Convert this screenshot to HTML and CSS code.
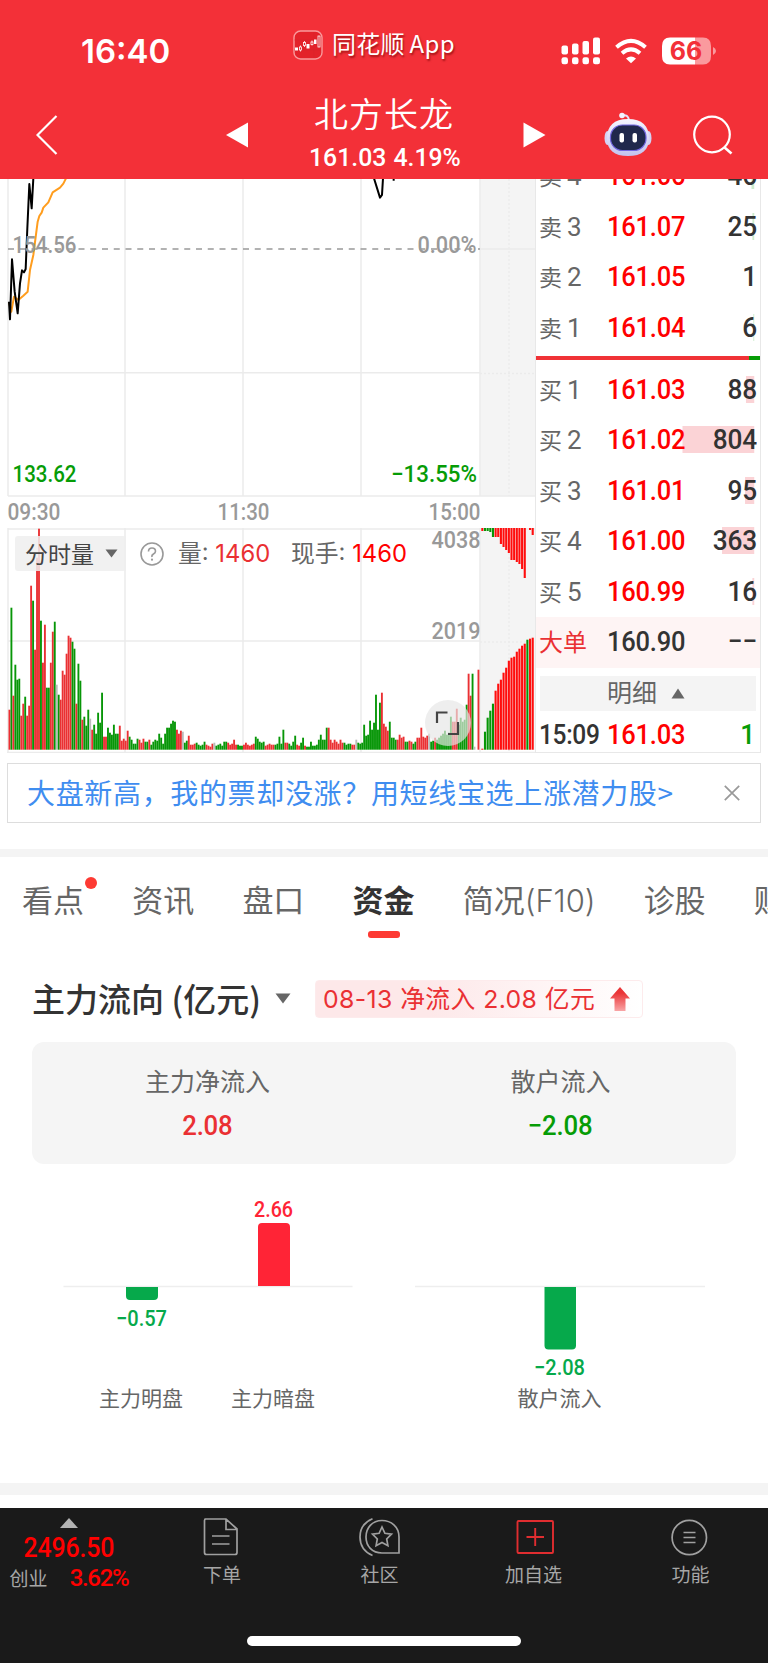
FILE: index.html
```html
<!DOCTYPE html>
<html lang="zh-CN">
<head>
<meta charset="utf-8">
<title>北方长龙 161.03</title>
<link rel="stylesheet" href="styles.css">
</head>
<body>
<div class="app">
  <header class="header">
    <div class="status">
      <div class="clock">16:40</div>
      <div class="source">
        <svg width="30" height="30" viewBox="0 0 30 30"><rect x="1" y="1" width="28" height="28" rx="6.5" fill="#e3222a" stroke="#f99a9c" stroke-width="1.4"/><path d="M1.500 10H28M1.500 20H28M21 2V28" stroke="#d8262c" stroke-width=".6"/><g fill="#fff"><rect x="2" y="17.500" width="3" height="3"/><rect x="13.500" y="14" width="3" height="4.500"/><rect x="21" y="9.500" width="2.500" height="4.500"/></g><g fill="none" stroke="#fff" stroke-width=".8"><path d="M7.500 15.500V17M7.500 20V21.500M11.500 11V12.500M11.500 15.500V17M19 10.500V12M19 14.500V15.500"/><rect x="6.500" y="17" width="2" height="3"/><rect x="10.500" y="12.500" width="2" height="3"/><rect x="18" y="12" width="2" height="2.500"/><rect x="25" y="6" width="2" height="11"/></g></svg>
        <span>同花顺 App</span>
      </div>
      <svg class="signals" width="156" height="30" viewBox="561 36 156 30">
        <g fill="#fff"><rect x="561.500" y="45.500" width="6.500" height="9" rx="2"/><rect x="572" y="43.500" width="6.500" height="11" rx="2"/><rect x="582.500" y="41" width="6.500" height="13.500" rx="2"/><rect x="593" y="37.500" width="7" height="17" rx="2"/><rect x="561.500" y="57.300" width="6.500" height="7" rx="2.200"/><rect x="572" y="57.300" width="6.500" height="7" rx="2.200"/><rect x="582.500" y="57.300" width="6.500" height="7" rx="2.200"/><rect x="593" y="57.300" width="7" height="7" rx="2.200"/>
        <path d="M626 58.500Q631 54.500 636 58.500L631 63.300Z"/></g>
        <g fill="none" stroke="#fff" stroke-width="4"><path d="M616.500 47.300Q631 34.500 645.500 47.300"/><path d="M622 53.300Q631 45.500 640 53.300"/></g>
        <path d="M670 37.500H695V64.500H670Q662 64.500 662 56V46Q662 37.500 670 37.500Z" fill="#fff"/><path d="M695 37.500H703Q711 37.500 711 46V56Q711 64.500 703 64.500H695Z" fill="#fa9a9e"/><path d="M713 47Q716 48.500 716 51T713 55Z" fill="#fa9a9e"/>
        <text class="battery" x="686" y="60.200" text-anchor="middle">66</text>
      </svg>
    </div>
    <div class="nav">
      <svg class="nav-back" width="22" height="40" viewBox="0 0 22 40"><path d="M20.500 1L1.500 20L20.500 39" fill="none" stroke="#fff" stroke-width="2.200"/></svg>
      <svg class="nav-prev" width="23" height="26" viewBox="0 0 23 26"><path d="M22 .500V25.500L0 13Z" fill="#fff"/></svg>
      <div class="nav-title"><div class="stock-name">北方长龙</div><div class="stock-quote">161.03 4.19%</div></div>
      <svg class="nav-next" width="23" height="26" viewBox="0 0 23 26"><path d="M.500 .500V25.500L22.500 13Z" fill="#fff"/></svg>
      <svg class="nav-bot" width="48" height="44" viewBox="0 0 48 44"><defs><linearGradient id="shell" x1="0" y1="0" x2="0" y2="1"><stop offset="0" stop-color="#f5f5ff"/><stop offset="1" stop-color="#c3c2ee"/></linearGradient></defs><path d="M18 3.500Q24 2 25 8" fill="none" stroke="#e4e2fa" stroke-width="2"/><circle cx="18" cy="3.500" r="2.800" fill="#f3f2ff"/><ellipse cx="3.500" cy="26" rx="3" ry="7" fill="#d4d2f4"/><ellipse cx="44.500" cy="26" rx="3" ry="7" fill="#d4d2f4"/><path d="M24 7C38 7 45 14 45 26S38 44 24 44S3 38 3 26S10 7 24 7Z" fill="url(#shell)"/><rect x="6.500" y="13" width="35.500" height="25.500" rx="12" fill="#20284c" stroke="#7166df" stroke-width="1.200"/><rect x="15.500" y="21" width="4.500" height="9.500" rx="2" fill="#fff"/><rect x="28.500" y="21" width="4.500" height="9.500" rx="2" fill="#fff"/></svg>
      <svg class="nav-search" width="40" height="40" viewBox="0 0 40 40"><circle cx="19" cy="19.500" r="17.800" fill="none" stroke="#fff" stroke-width="2.200"/><path d="M31 32L38.500 38.500" stroke="#fff" stroke-width="2.600"/></svg>
    </div>
  </header>

  <section class="market">
    <div class="charts">
      <svg class="price-chart" width="535" height="349" viewBox="0 179 535 349">
        <rect x="480" y="179" width="55" height="317" fill="#f4f4f4"/>
        <g fill="none" stroke="#ebebeb" stroke-width="1.500"><path d="M8 179V496M125 179V496M243 179V496M361 179V496M480 179V496M8 372.800H480M8 496H535"/><path d="M480 249H535"/><path stroke-dasharray="2 2" d="M509 179V496M480 373.500H535"/></g>
        <path d="M8 249H480" fill="none" stroke="#999" stroke-width="1.700" stroke-dasharray="6 5.750"/>
        <g class="trace" transform="translate(0 175) scale(.33333)"><path stroke="#ff9d1e" d="M27 382L34 410L42 365L55 375L70 362L83 350L90 285L100 240L113 140L118 123L125 113L130 98L145 82L158 52L180 38L190 26L198 10"/><path stroke="#000" d="M27 380L30 433L36 253L44 350L53 415L60 325L66 286L72 292L77 282L82 160L88 27L95 100L100 10M1122 10L1140 68L1146 60L1149 10M1181 10V17"/></g>
        <g class="axis"><text x="12.500" y="253" textLength="64" lengthAdjust="spacingAndGlyphs">154.56</text><text x="417.500" y="253" textLength="59" lengthAdjust="spacingAndGlyphs">0.00%</text><text x="7.500" y="519.800" textLength="53" lengthAdjust="spacingAndGlyphs">09:30</text><text x="217.500" y="519.800" textLength="52" lengthAdjust="spacingAndGlyphs">11:30</text><text x="428.500" y="519.800" textLength="52" lengthAdjust="spacingAndGlyphs">15:00</text></g>
        <g class="axis axis-down"><text x="12.500" y="481.800" textLength="64" lengthAdjust="spacingAndGlyphs">133.62</text><text x="391" y="481.800" textLength="86" lengthAdjust="spacingAndGlyphs">−13.55%</text></g>
      </svg>
      <div class="volume">
        <svg width="535" height="225" viewBox="0 528 535 225">
          <rect x="480" y="528" width="55" height="222" fill="#f4f4f4"/>
          <g fill="none" stroke="#ebebeb" stroke-width="1.500"><path d="M8 529H535M8 528V753M125 528V752M243 528V752M361 528V752M480 528V752M8 641H480M7 752.500H535"/><path stroke-dasharray="2 2" d="M509 529V752M480 642H535"/></g>
          <g id="volume-bars"></g>
          <g class="axis"><text x="431.500" y="547.800" textLength="49" lengthAdjust="spacingAndGlyphs">4038</text><text x="431.500" y="639" textLength="49" lengthAdjust="spacingAndGlyphs">2019</text></g>
        </svg>
        <div class="volume-bar">
          <div class="picker">分时量<svg width="13" height="9" viewBox="0 0 13 9"><path d="M.500 .500H12.500L6.500 8.500Z" fill="#666"/></svg></div>
          <svg class="help" width="24" height="24" viewBox="0 0 24 24"><circle cx="12" cy="12" r="11" fill="none" stroke="#999" stroke-width="1.600"/><path d="M8.500 9.500Q8.500 6 12 6T15.500 9.300Q15.500 11 13.500 12T12 15" fill="none" stroke="#999" stroke-width="1.600"/><circle cx="12" cy="17.700" r="1.100" fill="#999"/></svg>
          <div class="vol-label">量: <b class="crimson">1460</b></div>
          <div class="vol-label">现手: <b>1460</b></div>
        </div>
        <svg class="expand" width="46" height="46" viewBox="0 0 46 46"><circle cx="23" cy="23" r="23" fill="#e6e6e6" fill-opacity=".68"/><path d="M12 23V12.500H22.500M33 22V34H23" fill="none" stroke="#444" stroke-width="2.200"/></svg>
      </div>
    </div>
    <div class="book">
      <div class="row"><span class="side">卖<i>4</i></span><span class="price">161.06</span><span class="qty"><em class="sell" style="width:3px"></em>46</span></div>
      <div class="row"><span class="side">卖<i>3</i></span><span class="price">161.07</span><span class="qty"><em class="sell" style="width:2px"></em>25</span></div>
      <div class="row"><span class="side">卖<i>2</i></span><span class="price">161.05</span><span class="qty">1</span></div>
      <div class="row"><span class="side">卖<i>1</i></span><span class="price">161.04</span><span class="qty"><em class="sell" style="width:1px"></em>6</span></div>
      <div class="ratio"><span></span></div>
      <div class="row"><span class="side">买<i>1</i></span><span class="price">161.03</span><span class="qty"><em style="width:9px"></em>88</span></div>
      <div class="row"><span class="side">买<i>2</i></span><span class="price">161.02</span><span class="qty"><em style="width:78px"></em>804</span></div>
      <div class="row"><span class="side">买<i>3</i></span><span class="price">161.01</span><span class="qty"><em style="width:10px"></em>95</span></div>
      <div class="row"><span class="side">买<i>4</i></span><span class="price">161.00</span><span class="qty"><em style="width:35px"></em>363</span></div>
      <div class="row"><span class="side">买<i>5</i></span><span class="price">160.99</span><span class="qty"><em style="width:2px"></em>16</span></div>
      <div class="row big"><span class="side">大单</span><span class="price">160.90</span><span class="qty dashes">−−</span></div>
      <div class="detail"><span>明细</span><svg width="14" height="11" viewBox="0 0 14 11"><path d="M7 .500L13.500 10.500H.500Z" fill="#666"/></svg></div>
      <div class="tick"><span class="tick-time">15:09</span><span class="price">161.03</span><span class="qty green">1</span></div>
    </div>
  </section>

  <div class="promo"><span>大盘新高，我的票却没涨？用短线宝选上涨潜力股&gt;</span><svg width="16" height="16" viewBox="0 0 16 16"><path d="M.800 .800L15.200 15.200M15.200 .800L.800 15.200" stroke="#999" stroke-width="1.700"/></svg></div>
  <div class="band"></div>

  <nav class="tabs"><span class="tab dotted">看点</span><span class="tab">资讯</span><span class="tab">盘口</span><span class="tab active">资金</span><span class="tab">简况<i>(F10)</i></span><span class="tab">诊股</span><span class="tab">财务</span></nav>

  <section class="flow">
    <div class="flow-head">
      <h2>主力流向 (亿元)</h2>
      <svg class="caret" width="16" height="11" viewBox="0 0 16 11"><path d="M.500 .500H15.500L8 10.500Z" fill="#666"/></svg>
      <div class="inflow"><span>08-13 净流入 2.08 亿元</span><svg width="20" height="24" viewBox="0 0 20 24"><defs><linearGradient id="up" x1="0" y1="0" x2="0" y2="1"><stop offset=".25" stop-color="#ea3537"/><stop offset="1" stop-color="#f9a5a6"/></linearGradient></defs><path d="M10 0L20 11.500H15.500V24H4.500V11.500H0Z" fill="url(#up)"/></svg></div>
    </div>
    <div class="summary">
      <div class="summary-item"><span>主力净流入</span><b class="crimson">2.08</b></div>
      <div class="summary-item"><span>散户流入</span><b class="green">−2.08</b></div>
    </div>
    <svg class="flow-chart" width="768" height="319" viewBox="0 1164 768 319">
      <path d="M63.500 1286.500H352.500M415 1286.500H705" stroke="#eee" stroke-width="1.500"/>
      <path d="M126 1287H158V1296Q158 1300 154 1300H130Q126 1300 126 1296ZM544.500 1287H576V1345.500Q576 1349.500 572 1349.500H548.500Q544.500 1349.500 544.500 1345.500Z" fill="#06a94b"/>
      <path d="M258 1286V1227Q258 1223 262 1223H286Q290 1223 290 1227V1286Z" fill="#ff2436"/>
      <g class="flow-value" fill="#06a94b"><text x="116" y="1325.500" textLength="51" lengthAdjust="spacingAndGlyphs">−0.57</text><text x="534" y="1374.500" textLength="51" lengthAdjust="spacingAndGlyphs">−2.08</text></g>
      <text class="flow-value" fill="#ff2436" x="254" y="1217.300" textLength="39" lengthAdjust="spacingAndGlyphs">2.66</text>
      <g class="flow-label"><text x="141" y="1405.500">主力明盘</text><text x="273" y="1405.500">主力暗盘</text><text x="559.500" y="1405.500">散户流入</text></g>
    </svg>
  </section>
  <div class="band bottom-band"></div>

  <footer class="dock">
    <div class="dock-row">
      <div class="index">
        <svg width="18" height="10" viewBox="0 0 18 10"><path d="M9 0L18 10H0Z" fill="#b3b3b3"/></svg>
        <b class="index-value">2496.50</b>
        <div class="index-line"><span>创业</span><b>3.62%</b></div>
      </div>
      <div class="action"><svg width="40" height="40" viewBox="2 0 40 40"><path d="M4.500 2H26L37 12V35.500Q37 37.500 35 37.500H6.500Q4.500 37.500 4.500 35.500V3.500Q4.500 2 6 2M26 2V12.500H37M12 19H29.500M12 27H29.500" class="line"/></svg><span>下单</span></div>
      <div class="action"><svg width="44" height="40" viewBox="0 0 44 40"><path d="M14.500 1.800Q2 7 2 20T14.500 38.500M24 3.500C33 3.500 41 9.500 41 20V36H24C14 36 8 29 8 20S14 3.500 24 3.500Z" class="line"/><path d="M24 10L26.900 16.300L33.500 17.200L28.700 22L29.900 28.700L24 25.500L18.100 28.700L19.300 22L14.500 17.200L21.100 16.300Z" class="line"/></svg><span>社区</span></div>
      <div class="action add"><svg width="40" height="40" viewBox="-1.500 0 40 40"><rect x="2" y="4" width="35.500" height="32" rx="1" class="line"/><path d="M19.700 11V29M11 20H28.500" class="line"/></svg><span>加自选</span></div>
      <div class="action"><svg width="40" height="40" viewBox="1.500 0 40 40"><circle cx="19.800" cy="20.500" r="17.200" class="line"/><path d="M14 15.500H26M14 20.500H26M14 25.500H26" class="line"/></svg><span>功能</span></div>
    </div>
    <div class="home"></div>
  </footer>
</div>
<script src="chart.js"></script>
</body>
</html>
```
FILE: styles.css
```css
* { box-sizing: border-box; }
body { margin: 0; background: #fff; font-family: "Noto Sans CJK SC", sans-serif; color: #333; }
svg { display: block; flex: none; }
b, i, em, h2 { font-style: normal; font-weight: inherit; margin: 0; }
.app { width: 768px; height: 1663px; overflow: hidden; display: flex; flex-direction: column; }
.app > * { flex: none; }
.crimson { color: #ea3033; }
.green { color: #069c06; }

.header { height: 179px; background: #f33038; color: #fff; }
.status { height: 92px; display: grid; grid-template-columns: 293px 268px 207px; align-items: start; }
.clock { padding: 31px 0 0 81px; font: 600 33px/40px Inter, sans-serif; letter-spacing: 0; }
.source { display: flex; align-items: center; gap: 9px; padding-top: 26px; height: 60px; font-size: 24px; line-height: 30px; letter-spacing: .3px; text-shadow: 1px 2px 2px rgba(110,0,0,.6); white-space: nowrap; }
.source svg { margin-top: 3px; }
.source span { word-spacing: -1px; }
.signals { margin-top: 36px; }
.battery { font: 700 25px Inter, sans-serif; fill: #f33038; }
.nav { height: 87px; display: flex; align-items: flex-start; }
.nav-back { margin: 23px 0 0 36px; }
.nav-prev { margin: 30px 0 0 168px; }
.nav-title { width: 274px; padding-right: 4px; text-align: center; white-space: nowrap; }
.stock-name { font-size: 34px; line-height: 40px; font-weight: 350; letter-spacing: 1px; padding-top: 1px; }
.stock-quote { font: 500 26.500px/30px Roboto, sans-serif; letter-spacing: 0; word-spacing: 1px; transform: scaleX(.935); padding: 9px 0 0 2px; }
.nav-next { margin-top: 30px; }
.nav-bot { margin: 20px 0 0 58px; }
.nav-search { margin: 23px 0 0 41px; }

.market { height: 574px; display: flex; }
.charts { width: 535px; }
.axis { font: 500 23px Roboto, sans-serif; fill: #999; }
.axis-down { fill: #069c06; }
.trace { fill: none; stroke-width: 6; stroke-linejoin: round; }
.volume { position: relative; height: 225px; }
.volume-bar { position: absolute; left: 15px; top: 8px; display: flex; align-items: center; height: 35px; white-space: nowrap; }
.picker { display: flex; align-items: center; gap: 11px; width: 111px; height: 35px; padding-left: 10px; background: rgba(239,239,239,.85); border-radius: 3px; font-size: 23px; line-height: 33px; color: #444; }
.help { margin: 0 14px 0 14px; }
.vol-label { width: 113px; font: 23.800px/34px Inter, "Noto Sans CJK SC", sans-serif; color: #666; }
.vol-label b { color: #f00; }
.vol-label .crimson { color: #ea3033; }
.expand { position: absolute; left: 425px; top: 172px; }

.book { width: 226px; height: 574px; overflow: hidden; border: 1.5px solid #e8e8e8; border-top: 0; display: flex; flex-direction: column; }
.row { flex: none; height: 50.500px; display: grid; grid-template-columns: 67px 86px 1fr; align-items: center; padding: 0 3px 0 3px; }
.row:first-child { margin-top: -28px; }
.side { font-size: 23px; line-height: 34px; padding-bottom: 2px; color: #666; }
.side i { font: 26px Roboto, sans-serif; margin-left: 5px; }
.price { position: relative; z-index: 1; justify-self: start; font: 500 28.500px/34px Roboto, sans-serif; letter-spacing: -.2px; transform: scaleX(.895); transform-origin: left; color: #f00; padding-left: 1px; }
.qty { font: 500 28.500px/34px Roboto, sans-serif; letter-spacing: -.2px; text-align: right; position: relative; z-index: 0; transform: scaleX(.92); transform-origin: right; }
.qty em { position: absolute; z-index: -1; right: 3px; top: 3px; height: 27px; background: #fbd3d6; }
.qty .sell { background: #cdeccd; }
.ratio { flex: none; height: 4px; margin: 3px 0 4.500px; background: #f03236; display: flex; justify-content: flex-end; }
.ratio span { width: 11px; background: #069c06; }
.big { background: #fef4f4; }
.big .side { color: #ea3033; font-size: 24px; }
.big .price { color: #333; }
.dashes { letter-spacing: -.2px; }
.detail { flex: none; height: 35px; margin: 8px 4px 0; padding-right: 4px; background: #f4f4f4; display: flex; align-items: center; justify-content: center; gap: 14px; font-size: 25px; line-height: 33px; color: #666; }
.detail span { padding-bottom: 4px; }
.tick { flex: none; display: grid; grid-template-columns: 67px 86px 1fr; padding: 0 5px 0 3px; margin-top: 7px; }
.tick-time { justify-self: start; font: 500 28.500px/34px Roboto, sans-serif; letter-spacing: -.4px; white-space: nowrap; transform: scaleX(.86); transform-origin: left; }
.tick .green { color: #069c06; }

.promo { margin: 10px 7px 0; height: 60px; border: 1.500px solid #ddd; display: flex; align-items: center; justify-content: space-between; padding: 0 20px 0 19px; font-size: 28px; letter-spacing: .66px; color: #3f8df0; white-space: nowrap; }
.promo span { padding-bottom: 2px; }
.band { height: 8px; margin-top: 26px; background: #f4f4f4; }

.tabs { height: 87px; display: flex; gap: 48.200px; padding: 21px 0 0 22px; overflow: hidden; }
.tab { flex: none; position: relative; height: 60px; font-size: 31px; line-height: 42px; color: #666; white-space: nowrap; }
.tab i { font-family: Inter, sans-serif; font-size: 31px; font-weight: 300; letter-spacing: -.1px; }
.active { color: #333; font-weight: 700; }
.active::after { content: ""; position: absolute; left: 15px; top: 53px; width: 32px; height: 7px; border-radius: 3px; background: #fd3a33; }
.dotted::after { content: ""; position: absolute; right: -13px; top: -1px; width: 12px; height: 12px; border-radius: 50%; background: #fd3a33; }

.flow { height: 539px; padding-top: 36px; }
.flow-head { display: flex; align-items: center; height: 37px; padding-left: 32px; }
.flow-head h2 { width: 243px; font-size: 33px; line-height: 40px; font-weight: 500; padding-bottom: 2px; white-space: nowrap; }
.inflow { display: flex; align-items: center; justify-content: space-between; width: 328px; height: 38px; margin-left: 24px; padding: 0 12px 0 7px; border: 1px solid #fdebec; border-radius: 4px; background: linear-gradient(90deg, #fde8e9 35%, #fff); color: #ea3033; font-family: Inter, "Noto Sans CJK SC", sans-serif; font-size: 24.800px; letter-spacing: .4px; line-height: 36px; white-space: nowrap; }
.summary { display: flex; height: 122px; margin: 25px 32px 0; border-radius: 12px; background: #f5f5f5; }
.summary-item { flex: 1; display: flex; flex-direction: column; align-items: center; padding-top: 18px; font-size: 25px; line-height: 40px; color: #666; }
.summary-item:first-child { padding-right: 2px; }
.summary-item b { font: 500 28px/34px Roboto, sans-serif; letter-spacing: -.2px; margin-top: 9px; transform: scaleX(.92); }
.summary-item .crimson { color: #ea3033; }
.summary-item .green { color: #069c06; }
.flow-value { font: 500 22px Roboto, sans-serif; }
.flow-label { font: 21px "Noto Sans CJK SC", sans-serif; fill: #666; text-anchor: middle; }
.bottom-band { height: 12px; margin-top: 0; }

.dock { margin-top: 13px; height: 155px; background: #1a1a1a; color: #a6a6a6; display: flex; flex-direction: column; align-items: center; }
.dock-row { width: 768px; height: 128px; display: grid; grid-template-columns: 139px 166px 149px 159px 155px; }
.index { display: flex; flex-direction: column; align-items: center; padding: 10px 1px 0 0; color: #f00; }
.index-value { font: 500 28px/34px Roboto, sans-serif; letter-spacing: -.2px; margin-top: 3px; transform: scaleX(.89); }
.index-line { display: flex; align-items: center; gap: 22px; line-height: 28px; margin-top: -1px; }
.index-line span { font-size: 19px; color: #a6a6a6; }
.index-line b { font: 500 24px/28px Roboto, sans-serif; letter-spacing: -1.300px; }
.action { display: flex; flex-direction: column; align-items: center; padding-top: 9px; font-size: 19px; line-height: 28px; }
.action span { margin-top: 3px; }
.line { fill: none; stroke: #a0a0a0; stroke-width: 1.700; }
.add .line { stroke: #e02d30; stroke-width: 1.900; }
.home { width: 274px; height: 10px; border-radius: 5px; background: #fff; }
```
FILE: chart.js
```js
// Per-minute volumes: colour letter (r, g, or n for unchanged) and height in pixels.
const minutes = `r40 g142 r54 g85 g70 g71 r34 r46 g53 r34 r44 r164 g149 r100 r192 r221 g129 r87 r125 g62
g62 r87 r118 g128 n65 g55 r50 r79 r75 r96 r114 r112 g108 g101 r46 g86 g69 r30 g33 g24
g40 n31 r20 g25 g16 g37 g27 g57 r13 r13 g22 g17 g15 g25 g16 g16 r24 r9 r11 r9
r19 g13 g10 g6 g6 g11 r10 r7 r11 g8 g8 r10 g5 g8 g10 g9 g16 g12 g6 g16
g22 g22 g26 g29 g28 r20 r16 r19 n18 g7 g9 r14 r5 r5 r6 g7 g5 g4 g5 g8
r5 r4 r3 r6 n7 g4 g5 g6 g4 g8 g8 r7 r5 r6 r10 r5 g5 g4 g4 r5
r7 r5 r4 r5 r6 g13 g11 g8 g7 g8 r4 r5 r6 r5 r5 g5 g6 g13 g6 g20
r7 r7 g6 g4 g8 g14 r5 r4 g7 g12 r4 g3 g3 g8 g4 g4 g5 g10 g15 g10
g10 g22 r22 r10 r7 r10 r8 r6 r10 r7 g7 g5 g6 g6 r5 r5 n10 g7 g6 g7
g25 g14 g15 g29 g20 g27 g55 g20 g47 r57 r26 r23 r19 g28 g12 g12 g10 r10 r15 r12
r13 g8 g8 r9 r8 g6 g8 r12 r12 r22 r13 r12 r14 n16 g8 g9 r12 g10 g12 g14
g16 g19 g15 g17 g33 r28 r28 r41 g25 g32 g28 g30 g45 r76 r54 g76 n3 n0 r80`.split(/\s+/);

// Opening auction: matched volume from the base, unmatched from the top.
const matched = 'r1 g18 g32 g39 g46 r59 r66 r70 r77 r82 r89 r92 r93 r98 r101 r104 r106 g110 r111 r112'.split(' ');
const unmatched = 'r3 g3 g3 g4 g9 r9 r9 r16 r19 r22 r25 r32 r32 r34 r36 r41 r50 r0 r2 r7'.split(' ');

const layer = document.getElementById('volume-bars');
const paint = { r: '#ea3033', g: '#079607', n: '#bbb' };
const strong = { r: '#ff0d0d', g: '#079607' };

function bar(x, y, width, height, fill) {
  const rect = document.createElementNS('http://www.w3.org/2000/svg', 'rect');
  Object.entries({ x, y, width, height, fill }).forEach(([key, value]) => rect.setAttribute(key, value));
  layer.appendChild(rect);
}

const step = 471 / minutes.length;
minutes.forEach((item, i) => {
  const height = +item.slice(1);
  bar(8.5 + i * step, 749.7 - height, step - .1, height, paint[item[0]]);
});
matched.forEach((item, i) => {
  const height = +item.slice(1);
  bar(481.3 + i * 2.65, 749.7 - height, 2.1, height, strong[item[0]]);
});
unmatched.forEach((item, i) => bar(481.3 + i * 2.65, 528, 2.1, +item.slice(1), strong[item[0]]));
```
